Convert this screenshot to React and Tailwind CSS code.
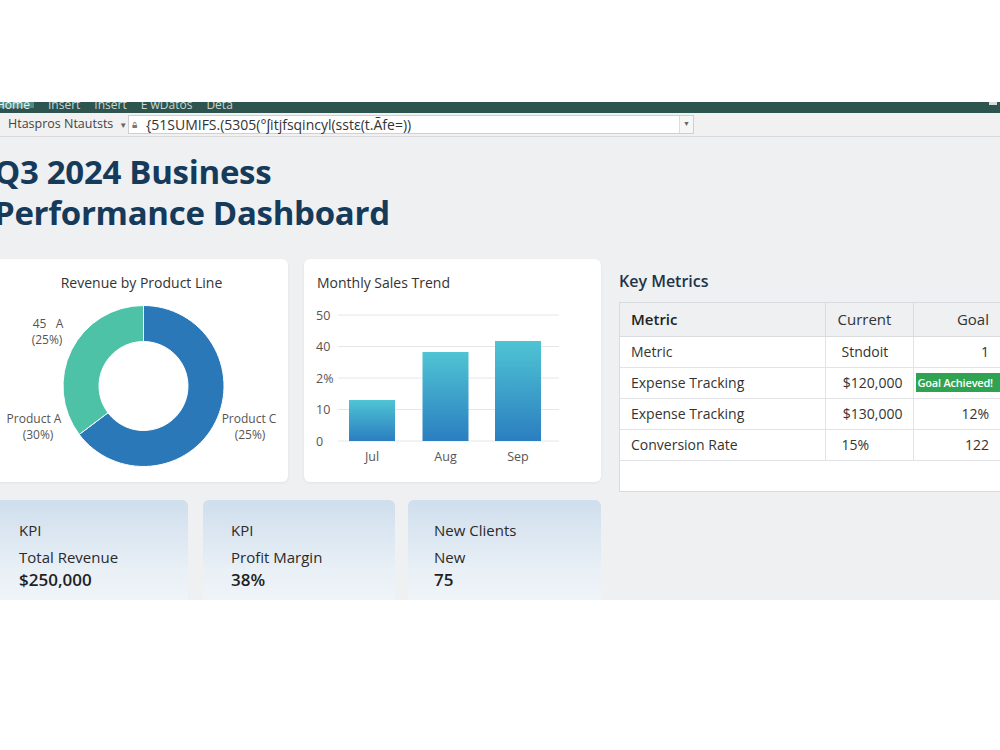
import React from 'react';

const font = { fontFamily: '"Open Sans", "Noto Sans", sans-serif' };

const tabs = [
  { label: 'Home', active: true },
  { label: 'Insert' },
  { label: 'Insert' },
  { label: 'E wDatos' },
  { label: 'Deta' },
];

const rows = [
  { metric: 'Metric', current: 'Stndoit', goal: '1', curAlign: 'left' },
  { metric: 'Expense Tracking', current: '$120,000', badge: true },
  { metric: 'Expense Tracking', current: '$130,000', goal: '12%' },
  { metric: 'Conversion Rate', current: '15%', goal: '122', curAlign: 'left' },
];

const kpis = [
  { w: 'w-[196px]', pl: 'pl-[27px]', head: 'KPI', label: 'Total Revenue', value: '$250,000' },
  { w: 'w-[192px]', pl: 'pl-[28px]', head: 'KPI', label: 'Profit Margin', value: '38%' },
  { w: 'w-[193px]', pl: 'pl-[26px]', head: 'New Clients', label: 'New', value: '75' },
];

// angles clockwise from 12 o'clock
function ringPath(cx, cy, r0, r1, a0, a1) {
  const pt = (r, a) => {
    const t = (a * Math.PI) / 180;
    return [cx + r * Math.sin(t), cy - r * Math.cos(t)];
  };
  const large = a1 - a0 > 180 ? 1 : 0;
  const [x1, y1] = pt(r1, a0);
  const [x2, y2] = pt(r1, a1);
  const [x3, y3] = pt(r0, a1);
  const [x4, y4] = pt(r0, a0);
  return `M${x1} ${y1} A${r1} ${r1} 0 ${large} 1 ${x2} ${y2} L${x3} ${y3} A${r0} ${r0} 0 ${large} 0 ${x4} ${y4} Z`;
}

const DonutCard = () => (
  <div className="w-[297px] h-[223px] bg-white rounded-md shadow-[0_1px_3px_rgba(0,0,0,0.06)] flex flex-col shrink-0">
    <div className="pt-[14px] h-[40px] text-[14px] leading-[20px] text-[#333] text-center pl-[4px]">Revenue by Product Line</div>
    <svg width="297" height="183" className="block">
      <path d={ringPath(152.5, 87, 44.5, 80.5, 0, 233)} fill="#2b78b9" stroke="#fff" strokeWidth="1" />
      <path d={ringPath(152.5, 87, 44.5, 80.5, 233, 360)} fill="#4dc2a6" stroke="#fff" strokeWidth="1" />
      <g fill="#555" fontSize="12" style={font} textAnchor="middle">
        <text x="57" y="29" xmlSpace="preserve">45   A</text>
        <text x="56" y="45">(25%)</text>
        <text x="43" y="124">Product A</text>
        <text x="47" y="140">(30%)</text>
        <text x="258" y="124">Product C</text>
        <text x="259" y="140">(25%)</text>
      </g>
    </svg>
  </div>
);

const grid = [
  { y: 16, label: '50' },
  { y: 47.5, label: '40' },
  { y: 79, label: '2%' },
  { y: 110.5, label: '10' },
  { y: 142, label: '0' },
];

const bars = [
  { x: 45, top: 101, label: 'Jul' },
  { x: 118.5, top: 53, label: 'Aug' },
  { x: 191, top: 42, label: 'Sep' },
];

const BarCard = () => (
  <div className="w-[297px] h-[223px] bg-white rounded-md shadow-[0_1px_3px_rgba(0,0,0,0.06)] flex flex-col shrink-0">
    <div className="pt-[14px] h-[40px] pl-[13px] text-[14px] leading-[20px] text-[#333]">Monthly Sales Trend</div>
    <svg width="297" height="183" className="block">
      <defs>
        <linearGradient id="barFill" x1="0" y1="0" x2="0" y2="1">
          <stop offset="0" stopColor="#4fc4d4" />
          <stop offset="1" stopColor="#2b7ec0" />
        </linearGradient>
      </defs>
      {grid.map((g) => (
        <g key={g.label}>
          <line x1="34" x2="255" y1={g.y} y2={g.y} stroke="#e4e6e9" strokeWidth="1" />
          <text x="12" y={g.y + 4.5} fontSize="12.5" fill="#555" style={font}>{g.label}</text>
        </g>
      ))}
      {bars.map((b) => (
        <g key={b.label}>
          <rect x={b.x} y={b.top} width="46" height={142 - b.top} fill="url(#barFill)" />
          <text x={b.x + 23} y="162" fontSize="12.5" fill="#555" textAnchor="middle" style={font}>{b.label}</text>
        </g>
      ))}
    </svg>
  </div>
);

const KeyMetrics = () => (
  <div className="ml-[18px] flex-1 h-[223px] pt-[11px]">
    <div className="h-[22px] text-[16px] leading-[22px] font-semibold text-[#1f3447]">Key Metrics</div>
    <div className="mt-[10px] w-[386px] bg-white border border-[#d9dcdf] h-[190px]">
      <table className="table-fixed border-collapse text-[14px] text-[#333] w-[384px]">
        <colgroup>
          <col className="w-[205px]" />
          <col className="w-[88px]" />
          <col />
        </colgroup>
        <thead>
          <tr className="bg-[#eef0f2] h-[33px] text-[15px]">
            <th className="text-left font-semibold pl-[11px] border-b border-r border-[#d9dcdf] text-[#222]">Metric</th>
            <th className="text-left font-normal pl-[12px] border-b border-r border-[#d9dcdf]">Current</th>
            <th className="text-right font-normal pr-[15px] border-b border-[#d9dcdf]">Goal</th>
          </tr>
        </thead>
        <tbody>
          {rows.map((r, i) => (
            <tr key={i} className="h-[31px]">
              <td className="pl-[11px] border-b border-r border-[#e1e3e6]">{r.metric}</td>
              <td className={`border-b border-r border-[#e1e3e6] whitespace-nowrap ${r.curAlign === 'left' ? 'text-left pl-[16px]' : 'text-right pr-[10px]'}`}>{r.current}</td>
              <td className="border-b border-[#e1e3e6] text-right pr-[15px]">
                {r.badge ? (
                  <div className="-mr-[15px] ml-[2px] h-[19px] bg-[#2fa352] text-white text-[11px] leading-[19px] font-semibold text-left pl-[2px] tracking-[-0.2px] whitespace-nowrap overflow-hidden">Goal Achieved!</div>
                ) : (
                  r.goal
                )}
              </td>
            </tr>
          ))}
        </tbody>
      </table>
    </div>
  </div>
);

export default function App() {
  return (
    <div className="w-[1000px] h-[750px] bg-white overflow-hidden flex flex-col" style={font}>
      <div className="h-[102px] shrink-0" />

      {/* ribbon tabs, clipped at the top */}
      <div className="h-[11px] bg-[#2d544f] overflow-hidden flex shrink-0 relative">
        {tabs.map((t, i) => (
          <div
            key={i}
            className={`h-[11px] text-[12px] leading-[16px] -mt-[5px] whitespace-nowrap ${t.active ? 'bg-[#4b8b85] text-[#e6f1ef] w-[38px] -ml-[4px]' : 'text-[#c9d8d5] ml-[12px] pl-[2px]'}`}
          >
            {t.label}
          </div>
        ))}
        <div className="absolute right-[3px] top-0 w-[8px] h-[3px] bg-[#d6dedd]" />
      </div>

      {/* formula bar */}
      <div className="h-[24px] bg-[#f1f1f1] border-b border-[#dadada] flex items-center shrink-0 text-[12.5px] text-[#444]">
        <span className="pl-[8px] w-[64px]">Htaspros</span>
        <span className="flex items-center gap-[6px] w-[64px]">Ntautsts<span className="text-[8px] text-[#666]">▼</span></span>
        <div className="w-[566px] h-[19px] bg-white border border-[#cfcfcf] flex items-center">
          <span className="w-[16px] pl-[3px] text-[10px] text-[#777]">🔒︎</span>
          <span className="text-[14px] leading-[17px] text-[#333] whitespace-nowrap flex-1 pl-[1px]">{'{51SUMIFS.(5305(°ʃitjfsqincyl(sstɛ(t.Ãfe=))'}</span>
          <span className="w-[14px] h-[17px] border-l border-[#dcdcdc] bg-[#f6f6f6] text-[7px] text-[#666] flex items-center justify-center">▼</span>
        </div>
      </div>

      {/* dashboard */}
      <div className="h-[463px] bg-[#eef0f2] overflow-hidden shrink-0 pt-[14px]">
        <h1 className="-ml-[6px] text-[33px] leading-[41px] font-bold text-[#163a59] tracking-[-0.3px]">
          Q3 2024 Business
          <br />
          Performance Dashboard
        </h1>

        <div className="mt-[26px] -ml-[9px] flex">
          <DonutCard />
          <div className="w-[16px] shrink-0" />
          <BarCard />
          <KeyMetrics />
        </div>

        <div className="mt-[18px] -ml-[8px] flex">
          {kpis.map((k, i) => (
            <div
              key={i}
              className={`${k.w} ${k.pl} ${i > 0 ? (i === 1 ? 'ml-[15px]' : 'ml-[13px]') : ''} h-[140px] rounded-t-md bg-linear-to-b from-[#cfdeed] via-[#e9f0f6] to-[#f7f9fb] pt-[20px] text-[#2a2a2a] shrink-0`}
            >
              <div className="text-[15px] leading-[20px]">{k.head}</div>
              <div className="mt-[7px] text-[15px] leading-[20px]">{k.label}</div>
              <div className="mt-[1px] text-[17px] leading-[24px] font-semibold text-[#1f1f1f]">{k.value}</div>
            </div>
          ))}
        </div>
      </div>

      <div className="flex-1 bg-white" />
    </div>
  );
}
